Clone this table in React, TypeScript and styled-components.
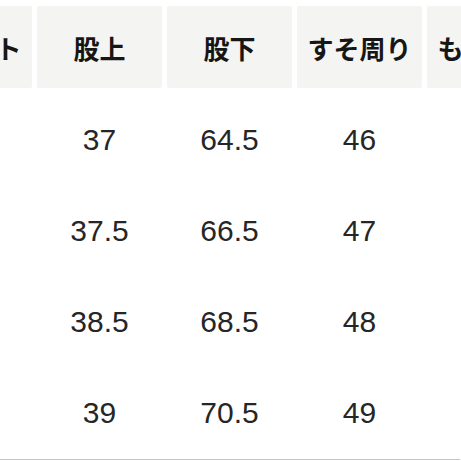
import React from "react";
import styled, { createGlobalStyle } from "styled-components";

const Global = createGlobalStyle`
  html, body {
    margin: 0;
    padding: 0;
    background: #ffffff;
    overflow: hidden;
  }
  body {
    width: 461px;
    height: 461px;
  }
`;

const Page = styled.div`
  width: 461px;
  height: 461px;
  overflow: hidden;
  background: #ffffff;
`;

const Table = styled.div`
  margin-left: -93px;
  padding-top: 6px;
  display: flex;
  flex-direction: column;
  width: 640px;
`;

const HeaderRow = styled.div`
  display: grid;
  grid-template-columns: repeat(5, 125px);
  column-gap: 5px;
  height: 82px;
`;

const HeadCell = styled.div`
  background: #f4f4f2;
  border-radius: 2px;
  display: flex;
  align-items: center;
  justify-content: center;
  font-family: "Noto Sans CJK JP", "Noto Sans", sans-serif;
  font-weight: 700;
  font-size: 26px;
  color: #161616;
  white-space: nowrap;
`;

const Body = styled.div`
  margin-top: 6px;
  display: flex;
  flex-direction: column;
  border-bottom: 1px solid #c4c4c4;
  width: 553px;
  padding-bottom: 1px;
`;

const DataRow = styled.div`
  display: grid;
  grid-template-columns: repeat(5, 125px);
  column-gap: 5px;
  height: 91px;
`;

const DataCell = styled.div`
  display: flex;
  align-items: center;
  justify-content: center;
  font-family: "Liberation Sans", Arial, sans-serif;
  font-size: 30px;
  color: #262626;
  white-space: nowrap;
`;

const headers = ["ウエスト", "股上", "股下", "すそ周り", "もも周り"];
const rows = [
  ["68", "37", "64.5", "46", "31"],
  ["72", "37.5", "66.5", "47", "32"],
  ["76", "38.5", "68.5", "48", "13.5"],
  ["80", "39", "70.5", "49", "35"],
];

export default function App() {
  return (
    <Page>
      <Global />
      <Table>
        <HeaderRow>
          {headers.map((h) => (
            <HeadCell key={h}>{h}</HeadCell>
          ))}
        </HeaderRow>
        <Body>
          {rows.map((r, i) => (
            <DataRow key={i}>
              {r.map((v, j) => (
                <DataCell key={j}>{v}</DataCell>
              ))}
            </DataRow>
          ))}
        </Body>
      </Table>
    </Page>
  );
}
